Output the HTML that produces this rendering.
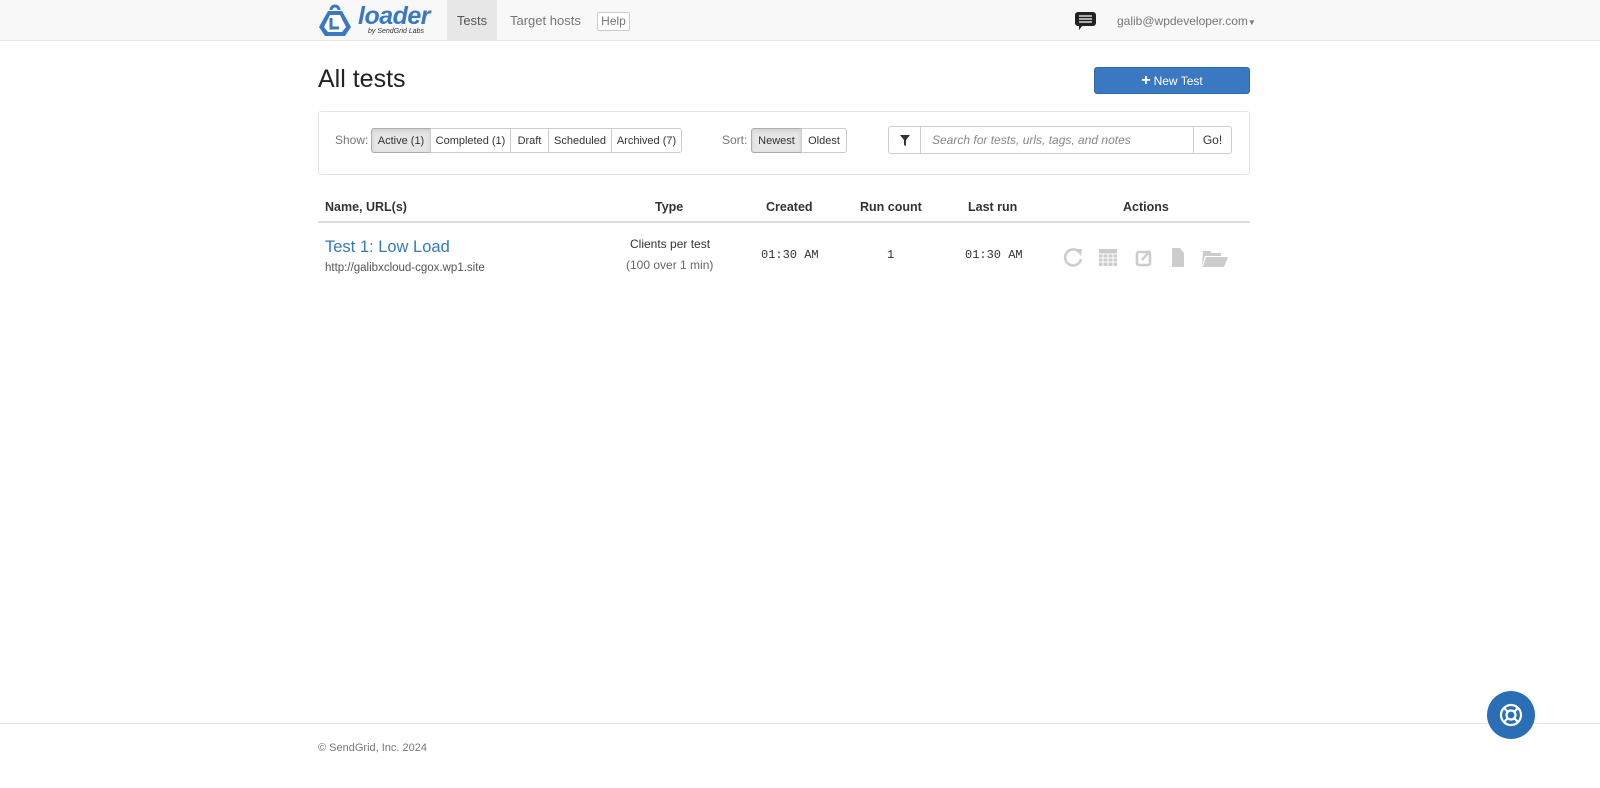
<!DOCTYPE html>
<html><head><meta charset="utf-8"><style>
*{box-sizing:border-box}
body{margin:0;width:1600px;height:788px;background:#fff;font-family:"Liberation Sans",Arial,sans-serif;color:#333;position:relative;overflow:hidden}
.nav{position:absolute;left:0;top:0;width:1600px;height:41px;background:#f8f8f8;border-bottom:1px solid #e7e7e7}
.abs{position:absolute}
.btn{position:absolute;border:1px solid #ccc;font-size:11px;color:#333;display:flex;align-items:center;justify-content:center;background:#fff}
.act{background:#e6e6e6;box-shadow:inset 0 2px 4px rgba(0,0,0,.1);border-color:#adadad}
th,td{}
.h{position:absolute;top:200px;font-size:12.5px;font-weight:bold;color:#333}
.mono{font-family:"Liberation Mono",monospace;font-size:12px;color:#333}
</style></head><body>
<div class="nav">
 <svg class="abs" style="left:318px;top:4px" width="34" height="33" viewBox="0 0 34 33"><path d="M13 6a4 4 0 0 1 8 0" stroke="#3a78c2" stroke-width="3" fill="none"/><path d="M10 7h14l9 16-6 9H7l-6-9z" fill="#3a78c2"/><path d="M12 11h10l6 12-4 5H10l-4-5z" fill="#fff"/><path d="M13 14v10h8" stroke="#3a78c2" stroke-width="3" fill="none"/></svg>
 <div class="abs" style="left:358px;top:2px;font-size:25px;font-weight:bold;font-style:italic;color:#3a78c2;letter-spacing:-0.5px">loader</div>
 <div class="abs" style="left:368px;top:28px;font-size:7px;font-style:italic;color:#333">by SendGrid Labs</div>
 <div class="abs" style="left:447px;top:0;width:50px;height:41px;background:#e7e7e7;font-size:13px;color:#555;text-align:center;line-height:41px">Tests</div>
 <div class="abs" style="left:510px;top:13px;font-size:13px;color:#777">Target hosts</div>
 <div class="abs" style="left:597px;top:12px;width:33px;height:19px;border:1px solid #ccc;background:#fff;font-size:12px;color:#777;text-align:center;line-height:17px;border-radius:2px">Help</div>
 <svg class="abs" style="left:1075px;top:12px" width="22" height="19" viewBox="0 0 22 19"><rect x="0" y="0" width="21" height="14" rx="3" fill="#222"/><path d="M4 13v5l4-5z" fill="#222"/><path d="M4 4h13M4 7h13M4 10h13" stroke="#fff" stroke-width="1.3"/></svg>
 <div class="abs" style="left:1117px;top:14px;font-size:12px;color:#777">galib@wpdeveloper.com<span style="font-size:8px">▼</span></div>
</div>
<div class="abs" style="left:318px;top:65px;font-size:25px;color:#222">All tests</div>
<div class="abs" style="left:1094px;top:67px;width:156px;height:27px;background:#3a78c2;border:1px solid #2e6da4;border-radius:3px;color:#fff;font-size:12px;display:flex;align-items:center;justify-content:center"><b style="font-size:16px;margin-right:3px">+</b>New Test</div>
<div class="abs" style="left:318px;top:111px;width:932px;height:64px;border:1px solid #e3e3e3;border-radius:3px"></div>
<div class="abs" style="left:335px;top:133px;font-size:12px;color:#777">Show:</div>
<div class="btn act" style="left:371px;top:128px;width:60px;height:25px;border-radius:3px 0 0 3px">Active (1)</div>
<div class="btn" style="left:430px;top:128px;width:81px;height:25px">Completed (1)</div>
<div class="btn" style="left:510px;top:128px;width:39px;height:25px">Draft</div>
<div class="btn" style="left:548px;top:128px;width:64px;height:25px">Scheduled</div>
<div class="btn" style="left:611px;top:128px;width:71px;height:25px;border-radius:0 3px 3px 0">Archived (7)</div>
<div class="abs" style="left:722px;top:133px;font-size:12px;color:#777">Sort:</div>
<div class="btn act" style="left:751px;top:128px;width:51px;height:25px;border-radius:3px 0 0 3px">Newest</div>
<div class="btn" style="left:801px;top:128px;width:46px;height:25px;border-radius:0 3px 3px 0">Oldest</div>
<div class="btn" style="left:888px;top:126px;width:33px;height:28px;border-radius:3px 0 0 3px"><svg width="10" height="11" viewBox="0 0 10 11"><path d="M0 0h10L6 5v6L4 10V5z" fill="#333"/></svg></div>
<div class="btn" style="left:920px;top:126px;width:274px;height:28px;justify-content:flex-start;padding-left:11px;font-style:italic;font-size:12px;color:#888">Search for tests, urls, tags, and notes</div>
<div class="btn" style="left:1193px;top:126px;width:39px;height:28px;border-radius:0 3px 3px 0;font-size:12px">Go!</div>
<div class="h" style="left:325px">Name, URL(s)</div>
<div class="h" style="left:655px">Type</div>
<div class="h" style="left:766px">Created</div>
<div class="h" style="left:860px">Run count</div>
<div class="h" style="left:968px">Last run</div>
<div class="h" style="left:1123px">Actions</div>
<div class="abs" style="left:318px;top:221px;width:932px;height:2px;background:#ddd"></div>
<div class="abs" style="left:325px;top:238px;font-size:16.5px;color:#337ab7">Test 1: Low Load</div>
<div class="abs" style="left:325px;top:262px;font-size:11.5px;color:#555">http://galibxcloud-cgox.wp1.site</div>
<div class="abs" style="left:630px;top:237px;font-size:12px;color:#333">Clients per test</div>
<div class="abs" style="left:626px;top:258px;font-size:12px;color:#666">(100 over 1 min)</div>
<div class="abs mono" style="left:761px;top:248px">01:30 AM</div>
<div class="abs mono" style="left:887px;top:248px">1</div>
<div class="abs mono" style="left:965px;top:248px">01:30 AM</div>
<svg class="abs" style="left:1062px;top:246px" width="170" height="22" viewBox="0 0 170 22">
 <g fill="#ccc" stroke="#ccc">
 <path d="M17 6A8 8 0 1 0 19 13" fill="none" stroke-width="2.6"/><path d="M13 3l7 0-1 7z" stroke="none"/>
 <rect x="37" y="3" width="18" height="17" stroke="none"/><g stroke="#fff" stroke-width="1"><path d="M37 8h18M37 12h18M37 16h18M41 8v12M46 8v12M51 8v12"/></g>
 <rect x="75" y="6" width="13" height="13" fill="none" stroke-width="2.6" rx="2"/><path d="M80 14l8-9" stroke-width="2.5"/>
 <path d="M110 2h8l4 5v14h-12z" stroke="none"/>
 <path d="M141 5h7l2 2h9v3h-16l-3 11z" stroke="none"/><path d="M144 11h22l-4 10h-21z" stroke="none"/>
 </g></svg>
<div class="abs" style="left:0;top:723px;width:1600px;height:1px;background:#e5e5e5"></div>
<div class="abs" style="left:318px;top:742px;font-size:11px;color:#777">© SendGrid, Inc. 2024</div>
<div class="abs" style="left:1487px;top:691px;width:48px;height:48px;border-radius:50%;background:#2a6fb5"></div>
<svg class="abs" style="left:1497px;top:701px" width="28" height="28" viewBox="0 0 28 28"><g fill="none" stroke="#fff" stroke-width="2.2"><circle cx="14" cy="14" r="10"/><circle cx="14" cy="14" r="4.5"/><path d="M7 7l4 4M21 7l-4 4M7 21l4-4M21 21l-4-4"/></g></svg>
</body></html>
